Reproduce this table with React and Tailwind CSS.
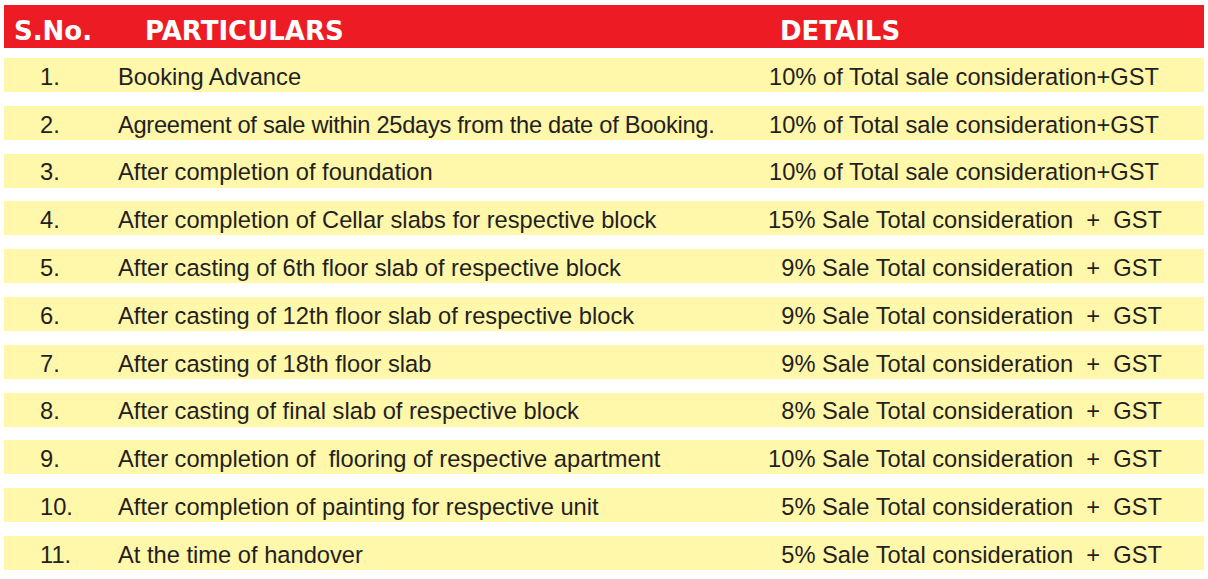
const rows = [
  ["1.", "Booking Advance", "10% of Total sale consideration+GST"],
  ["2.", "Agreement of sale within 25days from the date of Booking.", "10% of Total sale consideration+GST"],
  ["3.", "After completion of foundation", "10% of Total sale consideration+GST"],
  ["4.", "After completion of Cellar slabs for respective block", "15% Sale Total consideration  +  GST"],
  ["5.", "After casting of 6th floor slab of respective block", "9% Sale Total consideration  +  GST"],
  ["6.", "After casting of 12th floor slab of respective block", "9% Sale Total consideration  +  GST"],
  ["7.", "After casting of 18th floor slab", "9% Sale Total consideration  +  GST"],
  ["8.", "After casting of final slab of respective block", "8% Sale Total consideration  +  GST"],
  ["9.", "After completion of  flooring of respective apartment", "10% Sale Total consideration  +  GST"],
  ["10.", "After completion of painting for respective unit", "5% Sale Total consideration  +  GST"],
  ["11.", "At the time of handover", "5% Sale Total consideration  +  GST"],
];

export default function App() {
  return (
    <div className="w-[1208px] h-[579px] bg-white px-[4px] pt-[5px] overflow-hidden">
      {/* HEADER */}
      <div
        className="flex items-center h-[43px] bg-[#ed1c24] text-white font-bold text-[26px] pt-[9px]"
        style={{ fontFamily: '"DejaVu Sans", Verdana, sans-serif' }}
      >
        <div className="w-[141px] pl-[10px]">S.No.</div>
        <div className="w-[635px]">PARTICULARS</div>
        <div>DETAILS</div>
      </div>

      {/* ROWS */}
      <div
        className="flex flex-col gap-[13.8px] mt-[10px] text-[23.7px] text-[#231f20]"
        style={{ fontFamily: '"Liberation Sans", Arial, sans-serif' }}
      >
        {rows.map((r, i) => (
          <div key={r[0]} className="flex items-center h-[34px] bg-[#fff7aa] pt-[5px] whitespace-pre">
            <div className="w-[114px] pl-[36px]">{r[0]}</div>
            <div className={i === 1 ? "flex-1 tracking-[-0.3px]" : "flex-1"}>{r[1]}</div>
            <div className={i < 3 ? "text-right pr-[45px]" : "text-right pr-[42px]"}>{r[2]}</div>
          </div>
        ))}
      </div>
    </div>
  );
}
